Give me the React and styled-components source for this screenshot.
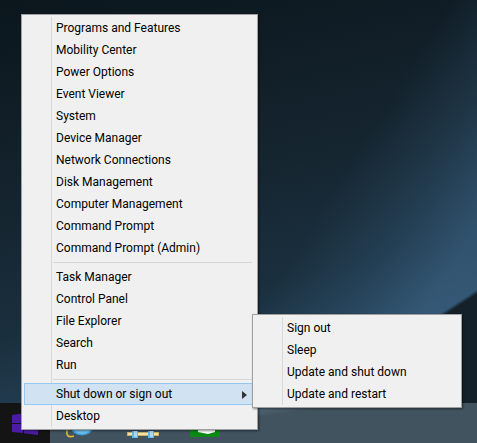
import React from "react";
import styled, { createGlobalStyle } from "styled-components";

const Global = createGlobalStyle`
  html, body { margin: 0; padding: 0; background: #0c171e; }
  #root { width: 477px; height: 443px; }
`;

const Desktop = styled.div`
  position: relative;
  width: 477px;
  height: 443px;
  overflow: hidden;
  font-family: "Roboto", "Noto Sans", sans-serif;
  background:
    linear-gradient(147deg, transparent 0 79.6%, #14212a 80.2% 100%),
    linear-gradient(122deg, rgba(70, 120, 160, 0) 0 60%, rgba(70, 120, 160, 0.22) 72%, rgba(80, 130, 175, 0.42) 82%),
    linear-gradient(168deg, #0b161d 0%, #14232d 35%, #1a2f3e 62%, #2a4a62 92%);
`;

const Taskbar = styled.div`
  position: absolute;
  left: 0;
  right: 0;
  bottom: 0;
  height: 40px;
  display: flex;
  background:
    linear-gradient(172deg, transparent 0 4px, rgba(110, 140, 165, 0.28) 8px, transparent 15px) 250px 0 / 90px 100% no-repeat,
    #41535f;
`;

const StartArea = styled.div`
  width: 50px;
  flex: none;
  background: #141414;
  padding: 10px 0 0 12px;
  box-sizing: border-box;
`;

const Slot = styled.div`
  width: 62px;
  flex: none;
  display: flex;
  justify-content: center;
  padding-top: 4px;
  box-sizing: border-box;
`;

const Menu = styled.div`
  position: absolute;
  left: ${(p) => p.$x}px;
  top: ${(p) => p.$y}px;
  width: ${(p) => p.$w}px;
  box-sizing: border-box;
  border: 1px solid #a0a0a0;
  padding: 2px;
  background: #f0f0f0;
  box-shadow: 1px 1px 2px rgba(0, 0, 0, 0.45);
  display: flex;
  flex-direction: column;
`;

const Gutter = styled.div`
  position: absolute;
  left: 29px;
  top: 2px;
  bottom: 2px;
  width: 1px;
  background: #d9d9d9;
`;

const Row = styled.div`
  position: relative;
  height: 22px;
  box-sizing: border-box;
  padding: 1px 0 0 32px;
  display: flex;
  align-items: center;
  justify-content: space-between;
  font-size: 12px;
  line-height: 21px;
  color: #000;
  white-space: nowrap;
  ${(p) =>
    p.$active &&
    `
    background: #d1e2f2;
    outline: 1px solid #91c9f7;
    outline-offset: -1px;
  `}
`;

const Separator = styled.div`
  position: relative;
  height: 1px;
  margin: 3px 3px 3px 29px;
  background: #d7d7d7;
`;

const Arrow = styled.svg`
  width: 5px;
  height: 8px;
  margin-right: 8px;
  flex: none;
`;

const topItems = [
  "Programs and Features",
  "Mobility Center",
  "Power Options",
  "Event Viewer",
  "System",
  "Device Manager",
  "Network Connections",
  "Disk Management",
  "Computer Management",
  "Command Prompt",
  "Command Prompt (Admin)",
];
const midItems = ["Task Manager", "Control Panel", "File Explorer", "Search", "Run"];
const subItems = ["Sign out", "Sleep", "Update and shut down", "Update and restart"];

const WindowsLogo = () => (
  <svg width="26" height="22" viewBox="0 0 26 22" style={{ display: "block" }}>
    <path d="M0 2 L11 0.5 V10 H0 Z M12 0.3 L26 -1 V10 H12 Z M0 11 H11 V20 L0 19 Z M12 11 H26 V22 L12 20.2 Z" fill="#4c1ba3" />
  </svg>
);

const IeIcon = () => (
  <svg width="32" height="32" viewBox="0 0 32 32">
    <path d="M3 21 C0 28 3 31 9 29" fill="none" stroke="#e0b83c" strokeWidth="1.6" />
    <ellipse cx="17" cy="20" rx="11" ry="8.5" fill="#3f9fdc" />
    <ellipse cx="17" cy="22" rx="8" ry="5" fill="#6fc0ee" />
  </svg>
);

const ExplorerIcon = () => (
  <svg width="32" height="32" viewBox="0 0 32 32">
    <rect x="0" y="25" width="32" height="4" fill="#c9b06a" />
    <rect x="1" y="26" width="30" height="2" fill="#f4e3a4" />
    <path d="M5 24 H11 V31 H5 Z M21 24 H27 V31 H21 Z" fill="#67b4e6" />
    <path d="M7 24 H10 V30 H7 Z M23 24 H26 V30 H23 Z" fill="#a9d8f4" />
  </svg>
);

const StoreIcon = () => (
  <svg width="32" height="32" viewBox="0 0 32 32">
    <rect x="1" y="10" width="30" height="20" fill="#0a8a14" />
    <path d="M9 10 H26 V25 L19 27 L9 25 Z" fill="#fff" />
  </svg>
);

export default function App() {
  return (
    <Desktop>
      <Global />
      <Taskbar>
        <StartArea>
          <WindowsLogo />
        </StartArea>
        <Slot><IeIcon /></Slot>
        <Slot><ExplorerIcon /></Slot>
        <Slot><StoreIcon /></Slot>
      </Taskbar>

      <Menu $x={21} $y={14} $w={237}>
        <Gutter />
        {topItems.map((t) => <Row key={t}>{t}</Row>)}
        <Separator />
        {midItems.map((t) => <Row key={t}>{t}</Row>)}
        <Separator />
        <Row $active>
          Shut down or sign out
          <Arrow viewBox="0 0 5 8"><path d="M0 0 L5 4 L0 8 Z" fill="#333" /></Arrow>
        </Row>
        <Row>Desktop</Row>
      </Menu>

      <Menu $x={252} $y={314} $w={210}>
        <Gutter />
        {subItems.map((t) => <Row key={t}>{t}</Row>)}
      </Menu>
    </Desktop>
  );
}
